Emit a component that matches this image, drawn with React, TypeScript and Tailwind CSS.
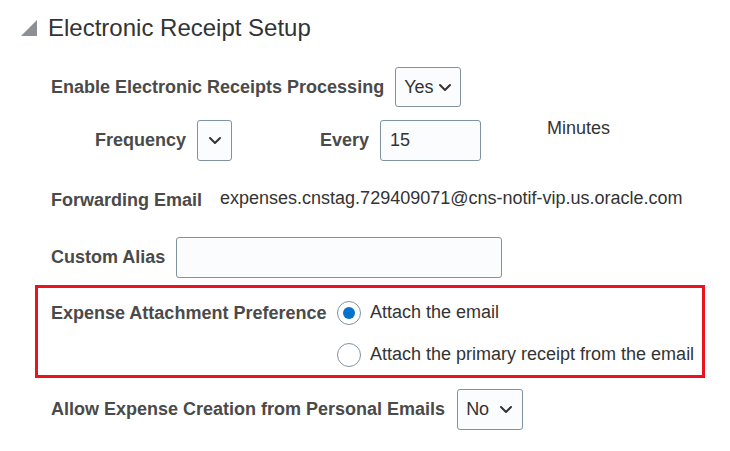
import React from "react";

const Chevron = () => (
  <svg width="14" height="9" viewBox="0 0 14 9" fill="none">
    <path d="M2 2 L7 7 L12 2" stroke="#333" strokeWidth="2" strokeLinecap="round" strokeLinejoin="round" />
  </svg>
);

export default function App() {
  const label = "text-[18px] font-bold text-[#4a4a4a] whitespace-nowrap";
  const boxCls = "border border-[#8193a0] rounded-[3px] bg-[#fbfcfd]";
  return (
    <div className="w-[730px] h-[451px] bg-white font-['Liberation_Sans',Arial,sans-serif] pt-[12px] text-[#333]">
      <div className="flex items-center h-[32px] pl-[21px]">
        <svg width="16" height="16" viewBox="0 0 16 16" className="mr-[11px]">
          <polygon points="16,0 16,16 0,16" fill="#8c8f93" />
        </svg>
        <span className="text-[24px] text-[#333] whitespace-nowrap">Electronic Receipt Setup</span>
      </div>

      <div className="flex items-center h-[40px] mt-[23px] pl-[51px]">
        <span className={label}>Enable Electronic Receipts Processing</span>
        <div className={`${boxCls} ml-[11px] w-[66px] h-[40px] flex items-center justify-between pl-[8px] pr-[8px]`}>
          <span className="text-[18px] text-[#333]">Yes</span>
          <Chevron />
        </div>
      </div>

      <div className="flex h-[41px] mt-[13px]">
        <div className="flex items-center h-[41px] w-[186px] justify-end">
          <span className={label}>Frequency</span>
        </div>
        <div className={`${boxCls} ml-[11px] w-[35px] h-[41px] flex items-center justify-center`}>
          <Chevron />
        </div>
        <div className="flex items-center h-[41px] w-[137px] justify-end">
          <span className={label}>Every</span>
        </div>
        <div className={`${boxCls} ml-[11px] w-[101px] h-[41px] flex items-center pl-[9px]`}>
          <span className="text-[18px] text-[#333]">15</span>
        </div>
        <div className="ml-[66px] -mt-[2px]">
          <span className="block text-[18px] text-[#333] leading-[20px]">Minutes</span>
        </div>
      </div>

      <div className="flex items-center h-[40px] mt-[19px] pl-[51px]">
        <span className={label}>Forwarding Email</span>
        <span className="ml-[18px] text-[18px] text-[#333] -mt-[3px] whitespace-nowrap">expenses.cnstag.729409071@cns-notif-vip.us.oracle.com</span>
      </div>

      <div className="flex items-center h-[41px] mt-[17px] pl-[51px]">
        <span className={label}>Custom Alias</span>
        <div className={`${boxCls} ml-[11px] w-[326px] h-[41px]`} />
      </div>

      <div className="ml-[35px] mt-[7px] w-[670px] h-[93px] border-[3px] border-[#e8141f] pl-[13px] pt-[13px]">
        <div className="flex items-center h-[24px]">
          <span className={`${label} w-[286px]`}>Expense Attachment Preference</span>
          <div className="w-[24px] h-[24px] rounded-full border border-[#8193a0] flex items-center justify-center bg-white">
            <div className="w-[12px] h-[12px] rounded-full bg-[#0572ce]" />
          </div>
          <span className="ml-[9px] text-[18px] text-[#333] -mt-[2px] whitespace-nowrap">Attach the email</span>
        </div>
        <div className="flex items-center h-[24px] mt-[18px]">
          <span className="w-[286px]" />
          <div className="w-[24px] h-[24px] rounded-full border border-[#8193a0] bg-white" />
          <span className="ml-[9px] text-[18px] text-[#333] -mt-[1px] whitespace-nowrap">Attach the primary receipt from the email</span>
        </div>
      </div>

      <div className="flex items-center h-[41px] mt-[11px] pl-[51px]">
        <span className={label}>Allow Expense Creation from Personal Emails</span>
        <div className={`${boxCls} ml-[12px] w-[66px] h-[41px] flex items-center justify-between pl-[8px] pr-[9px]`}>
          <span className="text-[18px] text-[#333]">No</span>
          <Chevron />
        </div>
      </div>
    </div>
  );
}
